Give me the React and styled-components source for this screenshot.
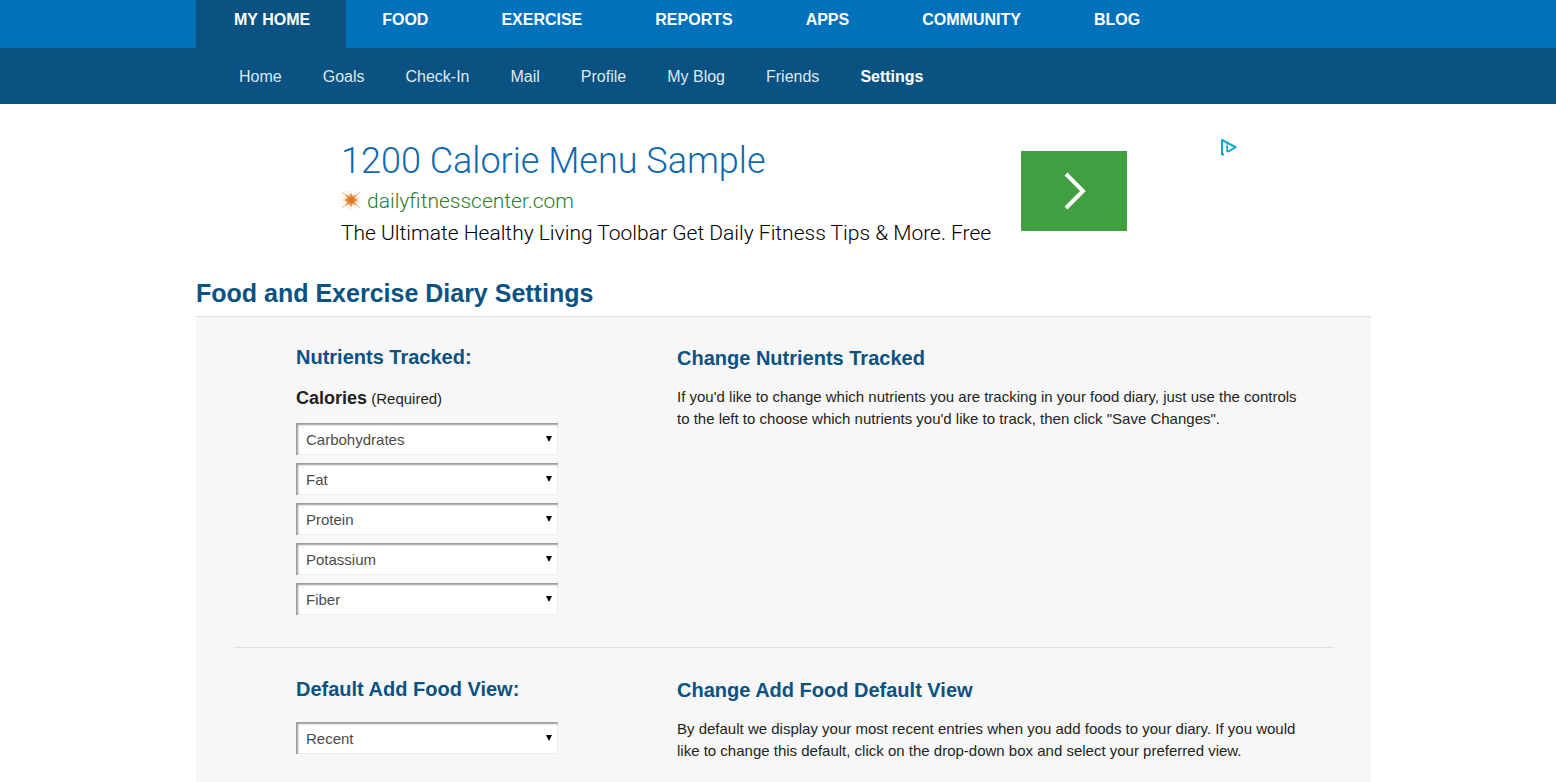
import React from 'react';
import styled, {createGlobalStyle} from 'styled-components';

const theme = {
    colors: {
        primary: '#0072bc',
        primaryDark: '#0a5281',
        panel: '#f7f7f7',
        line: '#e0e0e0',
        text: '#231f20',
        adTitle: '#0f69af',
        adUrl: '#2a7d2a',
        adButton: '#419f41',
        adChoices: '#14a3c7',
    },
    font: '"Liberation Sans", Arial, sans-serif',
    adFont: 'Roboto, sans-serif',
}

const GlobalStyle = createGlobalStyle`
    *, *::before, *::after {
        box-sizing: border-box;
    }
    body {
        margin: 0;
        background-color: #fff;
        color: ${theme.colors.text};
        font-family: ${theme.font};
        font-size: 15px;
        line-height: 22px;
    }
    a {
        color: inherit;
        text-decoration: none;
    }
    h1, h2, p {
        margin: 0;
    }
`
const Page = styled.div`
    display: flex;
    flex-direction: column;
    min-height: 100vh;
`
const Bar = styled.div`
    background-color: ${(props) => props.$dark ? theme.colors.primaryDark : theme.colors.primary};
    padding-left: 11px;
`
const Container = styled.div`
    width: 100%;
    max-width: 1175px;
    margin: 0 auto;
`
const MainNav = styled(Container)`
    display: flex;
    height: 48px;
`
const MainLink = styled.a`
    padding: ${(props) => props.$active ? '9px 36px 0 38px' : '9px 37px 0 36px'};
    background-color: ${(props) => props.$active ? theme.colors.primaryDark : 'transparent'};
    color: #fff;
    font-size: 16px;
    font-weight: bold;
    white-space: nowrap;
`
const SubNav = styled(Container)`
    display: flex;
    align-items: center;
    gap: 41px;
    height: 56px;
    padding: 2px 0 0 43px;
`
const SubLink = styled.a`
    color: ${(props) => props.$active ? '#fff' : '#dfe9f0'};
    font-size: 16px;
    font-weight: ${(props) => props.$active ? 'bold' : 'normal'};
    white-space: nowrap;
`
const Main = styled.main`
    display: flex;
    flex: 1;
    flex-direction: column;
    padding-left: 11px;
`
const Content = styled(Container)`
    display: flex;
    flex: 1;
    flex-direction: column;
`
const Ad = styled.aside`
    display: flex;
    align-items: flex-start;
    padding: 34px 134px 0 145px;
    font-family: ${theme.adFont};
    font-weight: 300;
    white-space: nowrap;
`
const AdTitle = styled.a`
    display: block;
    color: ${theme.colors.adTitle};
    font-size: 36px;
    line-height: 47px;
`
const AdUrl = styled.a`
    display: flex;
    align-items: center;
    gap: 6px;
    color: ${theme.colors.adUrl};
    font-size: 21px;
    line-height: 32px;
`
const AdText = styled.p`
    color: #000;
    font-size: 21px;
    line-height: 32px;
`
const AdButton = styled.button`
    display: flex;
    align-items: center;
    justify-content: center;
    width: 106px;
    height: 80px;
    margin: 13px 0 0 30px;
    padding: 0;
    border: 0;
    background-color: ${theme.colors.adButton};
`
const AdChoices = styled.a`
    display: flex;
    margin-left: auto;
`
const Title = styled.h1`
    margin-top: 29px;
    padding-bottom: 8px;
    color: ${theme.colors.primaryDark};
    font-size: 25px;
    line-height: 30px;
`
const Panel = styled.div`
    flex: 1;
    padding: 28px 37px 20px 38px;
    border-top: 1px solid ${theme.colors.line};
    background-color: ${theme.colors.panel};
`
const Section = styled.section`
    display: grid;
    grid-template-columns: 381px minmax(0, 626px);
    padding: 0 0 32px 62px;
    & + & {
        padding-top: 29px;
        padding-bottom: 0;
        border-top: 1px solid ${theme.colors.line};
    }
`
const Heading = styled.h2`
    color: ${theme.colors.primaryDark};
    font-size: 20px;
    line-height: 24px;
`
const Help = styled.div`
    padding-top: 1px;
    p {
        margin-top: 16px;
    }
`
const Required = styled.p`
    margin-top: 17px;
    line-height: 24px;
    strong {
        font-size: 18px;
    }
`
const Fields = styled.div`
    display: flex;
    flex-direction: column;
    gap: 8px;
    margin-top: ${(props) => props.$spaced ? '21px' : '12px'};
`
const Field = styled.div`
    position: relative;
    width: 262px;
    height: 32px;
    &::after {
        content: '';
        position: absolute;
        top: 13px;
        right: 6px;
        border: 3px solid transparent;
        border-top: 6px solid #000;
        border-bottom: 0;
        pointer-events: none;
    }
`
const Select = styled.select`
    display: block;
    width: 100%;
    height: 100%;
    padding: 0 24px 0 10px;
    border: 0;
    border-radius: 0;
    appearance: none;
    background-color: #fff;
    box-shadow: inset 2px 2px 2px #999, inset -1px -1px 0 #eee;
    color: #4c4c4c;
    font-family: inherit;
    font-size: 15px;
`

const mainLinks = ['MY HOME', 'FOOD', 'EXERCISE', 'REPORTS', 'APPS', 'COMMUNITY', 'BLOG'];
const subLinks = ['Home', 'Goals', 'Check-In', 'Mail', 'Profile', 'My Blog', 'Friends', 'Settings'];
const nutrients = ['Carbohydrates', 'Fat', 'Protein', 'Potassium', 'Fiber'];
const views = ['Recent', 'Frequent', 'My Foods', 'Meals', 'Recipes'];

const SunIcon = () => (
    <svg width="20" height="20" viewBox="0 1 20 20" aria-hidden="true">
        <path d="M10 0v20M0 10h20" stroke="#f6dfcb" strokeWidth="1"/>
        <path d="M1.5 2.5l17 15M18.5 2.5l-17 15" stroke="#e9a56c" strokeWidth="1"/>
        <path d="M6 1l8 18M14 1L6 19M1 7l18 6M19 7L1 13" stroke="#f6dfcb" strokeWidth="1"/>
        <path d="M4 4l4 2 2-3 2 3 4-2-2 4 3 2-3 2 2 4-4-2-2 3-2-3-4 2 2-4-3-2 3-2z" fill="#e8964f"/>
        <circle cx="10" cy="10" r="3" fill="#dc7626"/>
    </svg>
);

const ArrowIcon = () => (
    <svg width="24" height="38" viewBox="0 0 24 38" fill="none" stroke="#fff" strokeWidth="4" aria-hidden="true">
        <path d="M4 2l17 17L4 36"/>
    </svg>
);

const AdChoicesIcon = () => (
    <svg width="17" height="18" viewBox="0 0 17 18" fill="none" stroke={theme.colors.adChoices} aria-hidden="true">
        <path d="M4 16.5H2V2l13.6 7.2L7.5 14" strokeWidth="2" strokeLinejoin="round"/>
        <path d="M7 5v1.8M5.8 8.6h1.4V14" strokeWidth="1.6"/>
    </svg>
);

const Dropdown = ({label, value, options}) => {
    return (
        <Field>
            <Select aria-label={label} defaultValue={value}>
                {options.map((option) => <option key={option}>{option}</option>)}
            </Select>
        </Field>
    );
};

const App = () => {
    return (
        <Page>
            <GlobalStyle/>
            <Bar>
                <MainNav as="nav">
                    {mainLinks.map((link) => <MainLink key={link} href="#" $active={link === 'MY HOME'}>{link}</MainLink>)}
                </MainNav>
            </Bar>
            <Bar $dark>
                <SubNav as="nav">
                    {subLinks.map((link) => <SubLink key={link} href="#" $active={link === 'Settings'}>{link}</SubLink>)}
                </SubNav>
            </Bar>
            <Main>
                <Content>
                    <Ad>
                        <div>
                            <AdTitle href="#">1200 Calorie Menu Sample</AdTitle>
                            <AdUrl href="#"><SunIcon/>dailyfitnesscenter.com</AdUrl>
                            <AdText>The Ultimate Healthy Living Toolbar Get Daily Fitness Tips &amp; More. Free</AdText>
                        </div>
                        <AdButton aria-label="Open"><ArrowIcon/></AdButton>
                        <AdChoices href="#" aria-label="AdChoices"><AdChoicesIcon/></AdChoices>
                    </Ad>
                    <Title>Food and Exercise Diary Settings</Title>
                    <Panel>
                        <Section>
                            <div>
                                <Heading>Nutrients Tracked:</Heading>
                                <Required><strong>Calories</strong> (Required)</Required>
                                <Fields>
                                    {nutrients.map((nutrient, i) => (
                                        <Dropdown key={nutrient} label={`Nutrient ${i + 1}`} value={nutrient} options={nutrients}/>
                                    ))}
                                </Fields>
                            </div>
                            <Help>
                                <Heading>Change Nutrients Tracked</Heading>
                                <p>If you'd like to change which nutrients you are tracking in your food diary, just use the controls to the left to choose which nutrients you'd like to track, then click "Save Changes".</p>
                            </Help>
                        </Section>
                        <Section>
                            <div>
                                <Heading>Default Add Food View:</Heading>
                                <Fields $spaced>
                                    <Dropdown label="Default Add Food View" value="Recent" options={views}/>
                                </Fields>
                            </div>
                            <Help>
                                <Heading>Change Add Food Default View</Heading>
                                <p>By default we display your most recent entries when you add foods to your diary. If you would like to change this default, click on the drop-down box and select your preferred view.</p>
                            </Help>
                        </Section>
                    </Panel>
                </Content>
            </Main>
        </Page>
    );
};

export default App;
